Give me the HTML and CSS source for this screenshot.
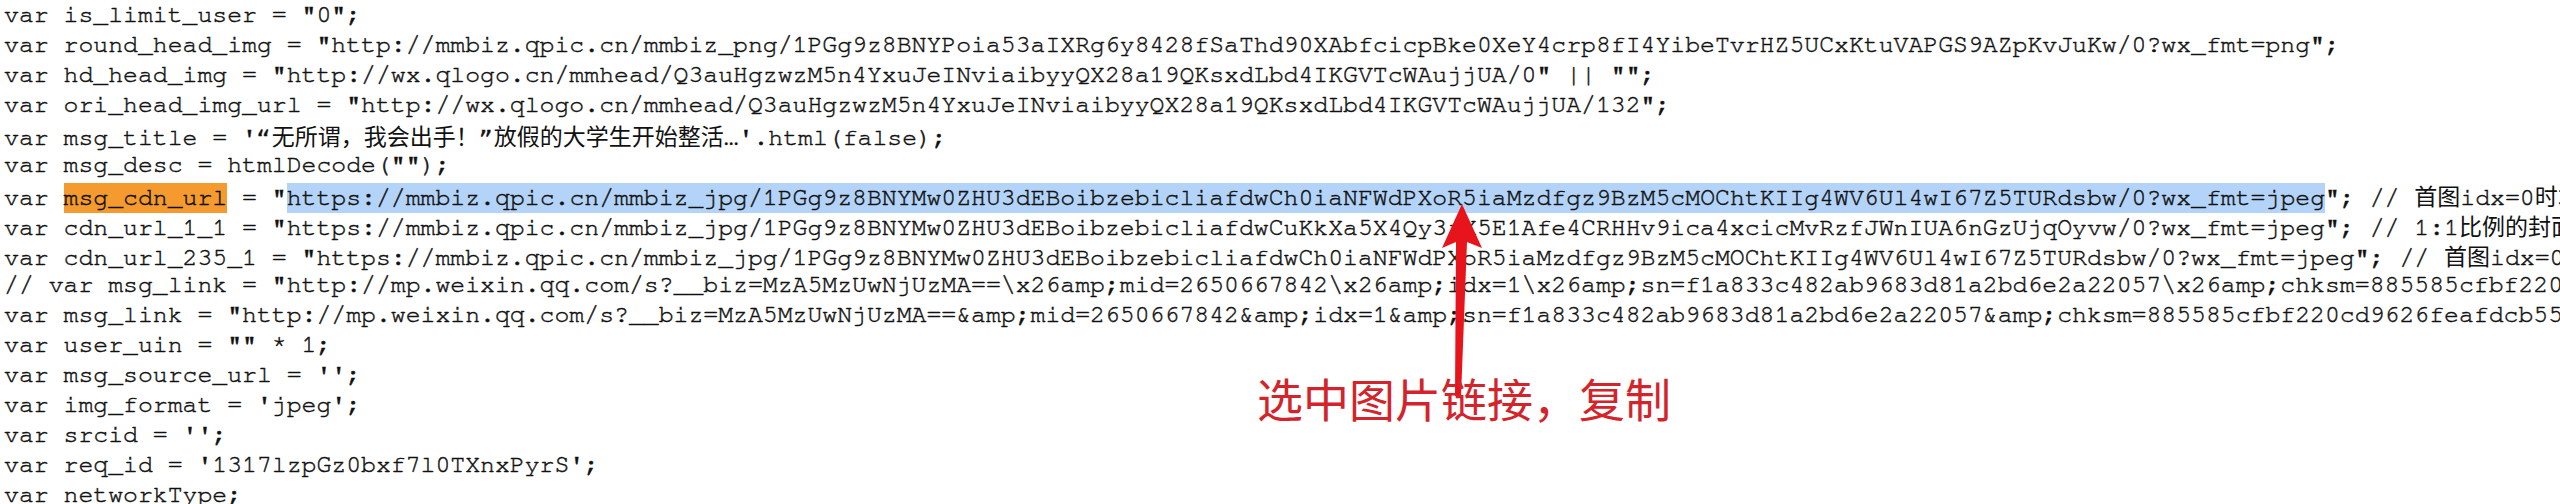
FILE: index.html
```html
<!DOCTYPE html>
<html lang="zh-CN">
<head>
<meta charset="utf-8">
<title>msg_cdn_url</title>
<link rel="stylesheet" href="styles.css">
</head>
<body>
<main class="page">
<pre class="code"><div class="ln">var is_limit_user = "0";</div><div class="ln">var round_head_img = "http://mmbiz.qpic.cn/mmbiz_png/1PGg9z8BNYPoia53aIXRg6y8428fSaThd90XAbfcicpBke0XeY4crp8fI4YibeTvrHZ5UCxKtuVAPGS9AZpKvJuKw/0?wx_fmt=png";</div><div class="ln">var hd_head_img = "http://wx.qlogo.cn/mmhead/Q3auHgzwzM5n4YxuJeINviaibyyQX28a19QKsxdLbd4IKGVTcWAujjUA/0" || "";</div><div class="ln">var ori_head_img_url = "http://wx.qlogo.cn/mmhead/Q3auHgzwzM5n4YxuJeINviaibyyQX28a19QKsxdLbd4IKGVTcWAujjUA/132";</div><div class="ln">var msg_title = '“<span class="cjk">无所谓，我会出手！</span>”<span class="cjk">放假的大学生开始整活</span>…'.html(false);</div><div class="ln">var msg_desc = htmlDecode("");</div><div class="ln">var <span class="find">msg_cdn_url</span> = "<span class="sel">https://mmbiz.qpic.cn/mmbiz_jpg/1PGg9z8BNYMw0ZHU3dEBoibzebicliafdwCh0iaNFWdPXoR5iaMzdfgz9BzM5cMOChtKIIg4WV6Ul4wI67Z5TURdsbw/0?wx_fmt=jpeg</span>"; // <span class="cjk">首图</span>idx=0<span class="cjk">时才有的首图链接</span></div><div class="ln">var cdn_url_1_1 = "https://mmbiz.qpic.cn/mmbiz_jpg/1PGg9z8BNYMw0ZHU3dEBoibzebicliafdwCuKkXa5X4Qy3jX5E1Afe4CRHHv9ica4xcicMvRzfJWnIUA6nGzUjqOyvw/0?wx_fmt=jpeg"; // 1:1<span class="cjk">比例的封面图</span></div><div class="ln">var cdn_url_235_1 = "https://mmbiz.qpic.cn/mmbiz_jpg/1PGg9z8BNYMw0ZHU3dEBoibzebicliafdwCh0iaNFWdPXoR5iaMzdfgz9BzM5cMOChtKIIg4WV6Ul4wI67Z5TURdsbw/0?wx_fmt=jpeg"; // <span class="cjk">首图</span>idx=0<span class="cjk">时才有</span></div><div class="ln">// var msg_link = "http://mp.weixin.qq.com/s?__biz=MzA5MzUwNjUzMA==\x26amp;mid=2650667842\x26amp;idx=1\x26amp;sn=f1a833c482ab9683d81a2bd6e2a22057\x26amp;chksm=885585cfbf220cd9626feafdcb55e4a7#rd";</div><div class="ln">var msg_link = "http://mp.weixin.qq.com/s?__biz=MzA5MzUwNjUzMA==&amp;amp;mid=2650667842&amp;amp;idx=1&amp;amp;sn=f1a833c482ab9683d81a2bd6e2a22057&amp;amp;chksm=885585cfbf220cd9626feafdcb55e4a7#rd";</div><div class="ln">var user_uin = "" * 1;</div><div class="ln">var msg_source_url = '';</div><div class="ln">var img_format = 'jpeg';</div><div class="ln">var srcid = '';</div><div class="ln">var req_id = '1317lzpGz0bxf7l0TXnxPyrS';</div><div class="ln">var networkType;</div></pre>
<svg class="arrow" width="64" height="210" viewBox="0 0 64 210" aria-hidden="true">
  <polygon points="32,8 52,52 37,46 31,200 25,200 26,46 12,52" fill="#e8141b"/>
</svg>
<p class="note">选中图片链接，复制</p>
</main>
</body>
</html>
```

FILE: styles.css
```css
html, body {
  margin: 0;
  padding: 0;
  background: #ffffff;
}

body {
  width: 2560px;
  height: 504px;
  overflow: hidden;
}

.page {
  position: relative;
  width: 2560px;
  height: 504px;
  overflow: hidden;
}

.code {
  margin: 0;
  padding: 0 0 0 4px;
  font-family: "Nimbus Mono PS", "Nimbus Mono L", "FreeMono", "Liberation Mono", "Noto Sans CJK SC", monospace;
  font-size: 24.8px;
  line-height: 30px;
  color: #111111;
  -webkit-text-stroke: 0.45px #111111;
  white-space: pre;
}

.ln {
  height: 30px;
}

.cjk {
  font-family: "Noto Sans CJK SC", sans-serif;
  font-size: 23px;
  -webkit-text-stroke: 0;
}

.find {
  background: #f59a2e;
  display: inline-block;
  line-height: 30px;
}

.sel {
  background: #b3d4f8;
  display: inline-block;
  line-height: 30px;
}

.arrow {
  position: absolute;
  left: 1430px;
  top: 196px;
}

.note {
  position: absolute;
  left: 1257px;
  top: 372px;
  margin: 0;
  font-family: "Noto Sans CJK SC", sans-serif;
  font-size: 46px;
  line-height: 50px;
  color: #d3242b;
  white-space: nowrap;
}
```
